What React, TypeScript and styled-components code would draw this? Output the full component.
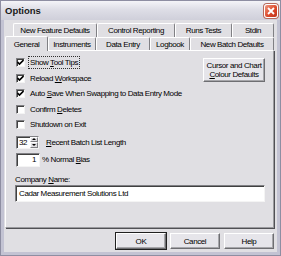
import React, { FC } from 'react'
import styled, { createGlobalStyle } from 'styled-components'

const GlobalStyle = createGlobalStyle`
  html, body {
    margin: 0;
    padding: 0;
    background: #ffffff;
  }
  * {
    box-sizing: border-box;
  }
`

interface TabProps {
  w: number
  selected?: boolean
}

const topTabs = [
  { label: 'New Feature Defaults', w: 84 },
  { label: 'Control Reporting', w: 78 },
  { label: 'Runs Tests', w: 57 },
  { label: 'Stdin', w: 42 },
]

const bottomTabs = [
  { label: 'General', w: 43, selected: true },
  { label: 'Instruments', w: 48 },
  { label: 'Data Entry', w: 54 },
  { label: 'Logbook', w: 40 },
  { label: 'New Batch Defaults', w: 84 },
]

const options = [
  { pre: 'Show ', key: 'T', post: 'ool Tips', checked: true, focus: true },
  { pre: 'Reload ', key: 'W', post: 'orkspace', checked: true },
  { pre: 'Auto ', key: 'S', post: 'ave When Swapping to Data Entry Mode', checked: true },
  { pre: 'Confirm ', key: 'D', post: 'eletes', checked: false },
  { pre: 'Shutdown on Exit', key: '', post: '', checked: false },
]

const CheckMark: FC = () => (
  <svg width="7" height="7" viewBox="0 0 7 7">
    <path d="M0.5 3 L2.5 5 L6.5 1" stroke="#000" strokeWidth="1.6" fill="none" />
  </svg>
)

const App: FC = () => {
  return (
    <>
      <GlobalStyle />
      <Window>
        <TitleBar>
          <Title>Options</Title>
          <CloseButton>
            <svg width="8" height="8" viewBox="0 0 8 8">
              <path d="M1 1 L7 7 M7 1 L1 7" stroke="#fff" strokeWidth="1.8" />
            </svg>
          </CloseButton>
        </TitleBar>
        <Body>
          <TabRow indent={8} h={14}>
            {topTabs.map((t) => (
              <Tab key={t.label} w={t.w}>
                {t.label}
              </Tab>
            ))}
          </TabRow>
          <TabRow indent={0} h={13}>
            {bottomTabs.map((t) => (
              <Tab key={t.label} w={t.w} selected={t.selected}>
                {t.label}
              </Tab>
            ))}
          </TabRow>
          <Panel>
            <TopSection>
              <CheckList>
                {options.map((o) => (
                  <CheckRow key={o.pre}>
                    <CheckBox>{o.checked && <CheckMark />}</CheckBox>
                    <CheckLabel focus={o.focus}>
                      {o.pre}
                      {o.key && <u>{o.key}</u>}
                      {o.post}
                    </CheckLabel>
                  </CheckRow>
                ))}
              </CheckList>
              <DefaultsButton>
                <span>Cursor and Chart</span>
                <span>
                  <u>C</u>olour Defaults
                </span>
              </DefaultsButton>
            </TopSection>
            <FieldRow top={3}>
              <Spinner>
                <SpinValue>32</SpinValue>
                <SpinArrows>
                  <SpinArrow>
                    <svg width="4" height="2" viewBox="0 0 4 2">
                      <path d="M0 2 L2 0 L4 2 Z" fill="#000" />
                    </svg>
                  </SpinArrow>
                  <SpinArrow>
                    <svg width="4" height="2" viewBox="0 0 4 2">
                      <path d="M0 0 L2 2 L4 0 Z" fill="#000" />
                    </svg>
                  </SpinArrow>
                </SpinArrows>
              </Spinner>
              <FieldLabel gap={7}>
                <u>R</u>ecent Batch List Length
              </FieldLabel>
            </FieldRow>
            <FieldRow top={4}>
              <BiasBox>1</BiasBox>
              <FieldLabel gap={2}>
                % Normal <u>B</u>ias
              </FieldLabel>
            </FieldRow>
            <CompanyLabel>
              Company <u>N</u>ame:
            </CompanyLabel>
            <CompanyInput>Cadar Measurement Solutions Ltd</CompanyInput>
          </Panel>
          <ButtonRow>
            <DialogButton isDefault>OK</DialogButton>
            <DialogButton>Cancel</DialogButton>
            <DialogButton>Help</DialogButton>
          </ButtonRow>
        </Body>
      </Window>
    </>
  )
}

export default App

const Window = styled.div`
  width: 281px;
  height: 256px;
  background: #c3c3d3;
  border: 1px solid #8e8ea2;
  display: flex;
  flex-direction: column;
  font-family: 'Liberation Sans', Arial, sans-serif;
  font-size: 8px;
  letter-spacing: -0.4px;
  color: #000;
`

const TitleBar = styled.div`
  height: 19px;
  flex: none;
  display: flex;
  align-items: center;
  justify-content: space-between;
  padding: 0 2px 0 4px;
  background: linear-gradient(#f4f4f8 0%, #dedee6 45%, #cfcfda 100%);
`

const Title = styled.span`
  font-size: 9.5px;
  font-weight: bold;
  letter-spacing: 0;
  color: #1a1a1a;
`

const CloseButton = styled.div`
  width: 14px;
  height: 14px;
  border-radius: 3px;
  border: 1px solid #ffffff;
  background: linear-gradient(135deg, #f09880 0%, #dc4a2c 55%, #c0341c 100%);
  display: flex;
  align-items: center;
  justify-content: center;
  box-shadow: 0 0 0 1px #b86a5c;
`

const Body = styled.div`
  flex: 1;
  margin: 0 3px 3px 3px;
  padding: 3px 3px 0 1px;
  background: #e0dfe3;
  display: flex;
  flex-direction: column;
`

const TabRow = styled.div<{ indent: number; h: number }>`
  display: flex;
  height: ${(p) => p.h}px;
  margin-left: ${(p) => p.indent}px;
  flex: none;
`

const Tab = styled.div<TabProps>`
  width: ${(p) => p.w}px;
  flex: none;
  display: flex;
  align-items: center;
  justify-content: center;
  white-space: nowrap;
  background: #e0dfe3;
  border-top: 1px solid #ffffff;
  border-left: 1px solid #ffffff;
  border-right: 1px solid #808084;
  border-radius: 2px 2px 0 0;
  position: relative;
  ${(p) =>
    p.selected &&
    `
    z-index: 2;
    margin-bottom: -1px;
    height: 15px;
    margin-top: -1px;
  `}
`

const Panel = styled.div`
  height: 178px;
  flex: none;
  border-top: 1px solid #ffffff;
  border-left: 1px solid #ffffff;
  border-right: 1px solid #9a9a9e;
  border-bottom: 1px solid #9a9a9e;
  box-shadow: 1px 1px 0 #505054;
  display: flex;
  flex-direction: column;
  padding: 0 8px 0 10px;
  position: relative;
  z-index: 1;
`

const TopSection = styled.div`
  display: flex;
  justify-content: space-between;
  align-items: flex-start;
`

const CheckList = styled.div`
  display: flex;
  flex-direction: column;
  padding-top: 4px;
`

const CheckRow = styled.div`
  height: 15.5px;
  display: flex;
  align-items: center;
`

const CheckBox = styled.div`
  width: 9px;
  height: 9px;
  margin-right: 3px;
  background: #ffffff;
  border-top: 1px solid #808084;
  border-left: 1px solid #808084;
  border-right: 1px solid #f4f4f4;
  border-bottom: 1px solid #f4f4f4;
  box-shadow: inset 1px 1px 0 #404040;
  display: flex;
  align-items: center;
  justify-content: center;
`

const CheckLabel = styled.span<{ focus?: boolean }>`
  padding: 1px 1px;
  border: 1px dotted ${(p) => (p.focus ? '#303030' : 'transparent')};
  white-space: nowrap;
`

const DefaultsButton = styled.div`
  margin-top: 7px;
  width: 62px;
  height: 24px;
  display: flex;
  flex-direction: column;
  align-items: center;
  justify-content: center;
  line-height: 9px;
  background: #e6e5ea;
  border-top: 1px solid #ffffff;
  border-left: 1px solid #ffffff;
  border-right: 1px solid #6e6e72;
  border-bottom: 1px solid #6e6e72;
  box-shadow: inset -1px -1px 0 #a6a6aa;
  white-space: nowrap;
`

const FieldRow = styled.div<{ top: number }>`
  display: flex;
  align-items: center;
  margin-top: ${(p) => p.top}px;
`

const sunken = `
  background: #ffffff;
  border-top: 1px solid #808084;
  border-left: 1px solid #808084;
  border-right: 1px solid #f4f4f4;
  border-bottom: 1px solid #f4f4f4;
  box-shadow: inset 1px 1px 0 #404040;
`

const Spinner = styled.div`
  ${sunken}
  width: 23px;
  height: 13px;
  display: flex;
  align-items: stretch;
`

const SpinValue = styled.div`
  flex: 1;
  padding-left: 2px;
  display: flex;
  align-items: center;
`

const SpinArrows = styled.div`
  width: 8px;
  display: flex;
  flex-direction: column;
`

const SpinArrow = styled.div`
  flex: 1;
  background: #e0dfe3;
  border-top: 1px solid #ffffff;
  border-left: 1px solid #ffffff;
  border-right: 1px solid #808084;
  border-bottom: 1px solid #808084;
  display: flex;
  align-items: center;
  justify-content: center;
`

const FieldLabel = styled.span<{ gap: number }>`
  margin-left: ${(p) => p.gap}px;
  white-space: nowrap;
`

const BiasBox = styled.div`
  ${sunken}
  width: 24px;
  height: 14px;
  display: flex;
  align-items: center;
  justify-content: flex-end;
  padding-right: 3px;
`

const CompanyLabel = styled.div`
  margin-top: 8px;
  margin-left: -1px;
  height: 9px;
  line-height: 9px;
`

const CompanyInput = styled.div`
  ${sunken}
  margin-top: 1px;
  margin-left: -1px;
  height: 17px;
  line-height: 15px;
  padding-left: 3px;
`

const ButtonRow = styled.div`
  display: flex;
  justify-content: flex-end;
  gap: 4px;
  margin-top: 5px;
`

const DialogButton = styled.div<{ isDefault?: boolean }>`
  width: 50px;
  height: 16px;
  display: flex;
  align-items: center;
  justify-content: center;
  background: #e6e5ea;
  border-top: 1px solid #ffffff;
  border-left: 1px solid #ffffff;
  border-right: 1px solid #6e6e72;
  border-bottom: 1px solid #6e6e72;
  box-shadow: inset -1px -1px 0 #a6a6aa;
  ${(p) =>
    p.isDefault &&
    `
    outline: 1px solid #202020;
  `}
`
